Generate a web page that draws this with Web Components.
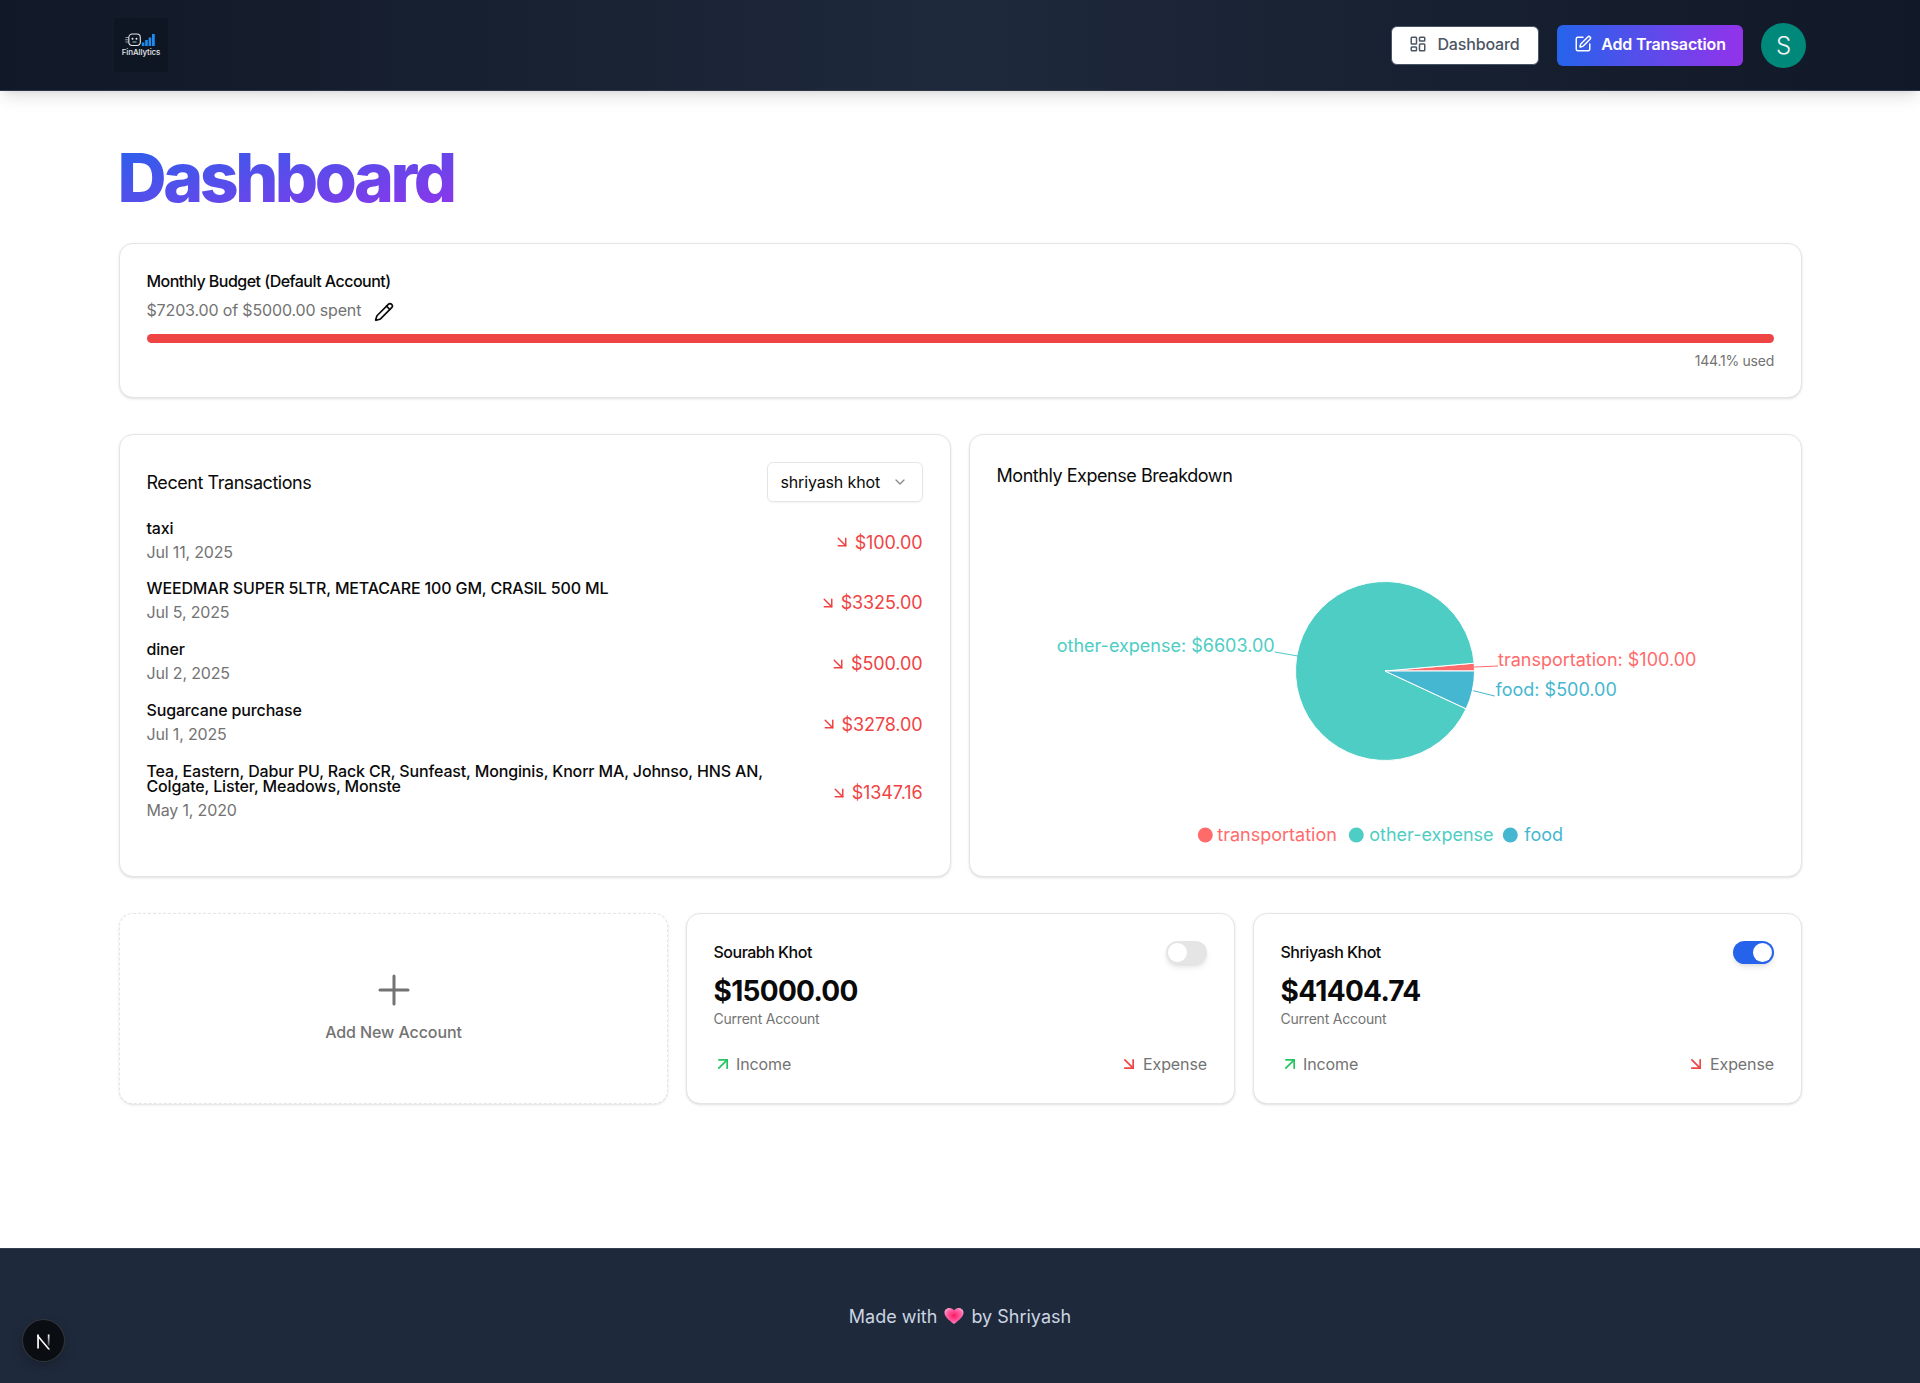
<!DOCTYPE html>
<html lang="en">
<head>
<meta charset="utf-8">
<title>Dashboard</title>
<style>
  html, body { margin: 0; padding: 0; background: #fff; }
  body { font-family: Inter, "Liberation Sans", sans-serif; color: #0a0a0a; }
</style>
</head>
<body>
<app-header></app-header>
<app-main>
  <budget-card></budget-card>
  <div slot="mid"><recent-transactions></recent-transactions></div>
  <div slot="mid"><expense-chart></expense-chart></div>
  <add-account slot="accounts"></add-account>
  <account-card slot="accounts" name="Sourabh Khot" amount="$15000.00"></account-card>
  <account-card slot="accounts" name="Shriyash Khot" amount="$41404.74" on></account-card>
</app-main>
<app-footer></app-footer>
<dev-badge></dev-badge>

<script>
const arrow = (size, dir) => `<svg width="${size}" height="${size}" viewBox="0 0 24 24" fill="none" stroke="currentColor" stroke-width="2" stroke-linecap="round" stroke-linejoin="round">${
  dir === "up" ? `<path d="M7 7h10v10"/><path d="M7 17 17 7"/>` : `<path d="m7 7 10 10"/><path d="M17 7v10H7"/>`
}</svg>`;

class AppHeader extends HTMLElement {
  constructor() {
    super();
    this.attachShadow({ mode: "open" }).innerHTML = `
      <style>
        :host {
          display: flex; align-items: center; justify-content: space-between;
          height: 91px; padding: 0 114px; box-sizing: border-box;
          background: linear-gradient(to right, #111827, #1e293b, #111827);
          border-bottom: 1px solid #2b3648;
          box-shadow: 0 10px 15px -3px rgba(0,0,0,.1), 0 4px 6px -4px rgba(0,0,0,.1);
          position: relative;
        }
        .logo { width: 54px; height: 54px; background: #0d1622; display: flex; flex-direction: column; align-items: center; justify-content: center; gap: 1px; }
        .logo span { font: 500 8px/9px Inter, sans-serif; color: #e5e7eb; letter-spacing: -.1px; }
        .nav { display: flex; align-items: center; }
        a { display: flex; align-items: center; justify-content: center; box-sizing: border-box; border-radius: 6px; font-size: 16px; letter-spacing: -.15px; padding-bottom: 2px; }
        .dash { width: 148px; height: 39px; gap: 10px; background: #fff; border: 1px solid #475569; color: #4b5563; font-weight: 500; margin-right: 18.5px; }
        .add { width: 186px; height: 41px; gap: 9px; background: linear-gradient(to right, #2563eb, #9333ea); color: #fff; font-weight: 600; margin-right: 18px; }
        .avatar { width: 45px; height: 45px; border-radius: 50%; background: #00897b; color: #f3f4f6; display: flex; align-items: center; justify-content: center; font-size: 24px; font-weight: 300; }
      </style>
      <div class="logo">
        <svg width="40" height="14" viewBox="0 0 40 14" fill="none">
          <rect x="7.800" y="1" width="11.500" height="11.500" rx="3.500" stroke="#e5e7eb" stroke-width="1.100"/>
          <circle cx="11.500" cy="5.800" r="1" fill="#e5e7eb"/><circle cx="15.500" cy="5.800" r="1" fill="#e5e7eb"/>
          <path d="M11.500 9h4" stroke="#e5e7eb" stroke-width=".8"/>
          <path d="M4.500 4.500h3M4 6.800h3.500M4.500 9h3" stroke="#d1d5db" stroke-width=".7"/>
          <rect x="20.800" y="9.500" width="2.600" height="3.500" fill="#1d8cf0"/>
          <rect x="24.200" y="7" width="2.600" height="6" fill="#1d8cf0"/>
          <rect x="27.600" y="4.500" width="2.600" height="8.500" fill="#1d8cf0"/>
          <rect x="31" y="1" width="2.800" height="12" fill="#1d8cf0"/>
        </svg>
        <span>FinAllytics</span>
      </div>
      <div class="nav">
        <a class="dash">
          <svg width="18" height="18" viewBox="0 0 24 24" fill="none" stroke="currentColor" stroke-width="2" stroke-linecap="round" stroke-linejoin="round"><rect width="7" height="9" x="3" y="3" rx="1"/><rect width="7" height="5" x="14" y="3" rx="1"/><rect width="7" height="9" x="14" y="12" rx="1"/><rect width="7" height="5" x="3" y="16" rx="1"/></svg>
          <span>Dashboard</span>
        </a>
        <a class="add">
          <svg width="18" height="18" viewBox="0 0 24 24" fill="none" stroke="currentColor" stroke-width="2" stroke-linecap="round" stroke-linejoin="round"><path d="M12 3H5a2 2 0 0 0-2 2v14a2 2 0 0 0 2 2h14a2 2 0 0 0 2-2v-7"/><path d="M18.375 2.625a1 1 0 0 1 3 3l-9.013 9.014a2 2 0 0 1-.853.505l-2.873.84a.5.5 0 0 1-.62-.62l.84-2.873a2 2 0 0 1 .506-.852z"/></svg>
          <span>Add Transaction</span>
        </a>
        <div class="avatar">S</div>
      </div>`;
  }
}

class AppMain extends HTMLElement {
  constructor() {
    super();
    this.attachShadow({ mode: "open" }).innerHTML = `
      <style>
        :host { display: block; padding: 0 118px 0 119px; height: 1157px; box-sizing: border-box; overflow: hidden; }
        h1 {
          margin: 46px 0 26px -1.500px;
          font-size: 68px; line-height: 80px; font-weight: 800; letter-spacing: -3.500px;
          width: max-content;
          background: linear-gradient(to bottom right, #2563eb, #9333ea);
          -webkit-background-clip: text; background-clip: text; color: transparent;
        }
        .mid { display: grid; grid-template-columns: 831.500px 1fr; gap: 18px; margin-top: 36px; height: 443px; }
        .accounts { display: grid; grid-template-columns: repeat(3, 1fr); gap: 18px; margin-top: 36px; }
      </style>
      <h1>Dashboard</h1>
      <slot></slot>
      <div class="mid"><slot name="mid"></slot></div>
      <div class="accounts"><slot name="accounts"></slot></div>`;
  }
}

const cardCss = `
  .card { background: #fff; border: 1px solid #e5e5e5; border-radius: 14px; box-shadow: 0 1px 3px rgba(0,0,0,.1), 0 1px 2px -1px rgba(0,0,0,.1); box-sizing: border-box; }
`;

class BudgetCard extends HTMLElement {
  constructor() {
    super();
    this.attachShadow({ mode: "open" }).innerHTML = `
      <style>
        ${cardCss}
        :host { display: block; }
        .card { height: 155px; padding: 27px 27px 0 26.500px; }
        .title { font-size: 16px; line-height: 20px; font-weight: 500; letter-spacing: -.53px; }
        .sub { display: flex; align-items: center; margin-top: 8px; height: 22px; font-size: 16px; letter-spacing: -.15px; color: #737373; gap: 13px; }
        .sub svg { color: #0a0a0a; margin-top: 3px; margin-left: -.5px; }
        .track { margin-top: 13px; height: 9px; border-radius: 5px; background: #ef4444; }
        .used { margin-top: 9px; text-align: right; font-size: 14px; letter-spacing: -.25px; line-height: 18px; color: #737373; }
      </style>
      <div class="card">
        <div class="title">Monthly Budget (Default Account)</div>
        <div class="sub"><span>$7203.00 of $5000.00 spent</span>
          <svg width="20" height="20" viewBox="0 0 24 24" fill="none" stroke="currentColor" stroke-width="2" stroke-linecap="round" stroke-linejoin="round"><path d="M21.174 6.812a1 1 0 0 0-3.986-3.987L3.842 16.174a2 2 0 0 0-.5.83l-1.321 4.352a.5.5 0 0 0 .623.622l4.353-1.32a2 2 0 0 0 .83-.497z"/><path d="m15 5 4 4"/></svg>
        </div>
        <div class="track"></div>
        <div class="used">144.1% used</div>
      </div>`;
  }
}

class RecentTransactions extends HTMLElement {
  constructor() {
    super();
    const rows = [
      ["taxi", "Jul 11, 2025", "$100.00"],
      ["WEEDMAR SUPER 5LTR, METACARE 100 GM, CRASIL 500 ML", "Jul 5, 2025", "$3325.00"],
      ["diner", "Jul 2, 2025", "$500.00"],
      ["Sugarcane purchase", "Jul 1, 2025", "$3278.00"],
      ["Tea, Eastern, Dabur PU, Rack CR, Sunfeast, Monginis, Knorr MA, Johnso, HNS AN, Colgate, Lister, Meadows, Monste", "May 1, 2020", "$1347.16"],
    ];
    this.attachShadow({ mode: "open" }).innerHTML = `
      <style>
        ${cardCss}
        :host { display: block; height: 100%; }
        .card { height: 100%; padding: 27px 27px 0 26.500px; }
        .head { display: flex; align-items: center; justify-content: space-between; height: 40px; }
        .head h2 { margin: 0; font-size: 18px; font-weight: 400; letter-spacing: -.45px; }
        .select { width: 156px; height: 40px; box-sizing: border-box; border: 1px solid #e5e5e5; border-radius: 6px; box-shadow: 0 1px 2px rgba(0,0,0,.05); display: flex; align-items: center; justify-content: space-between; padding: 0 14px 0 13px; font-size: 16px; letter-spacing: -.15px; }
        .select svg { color: #8a8a8a; }
        .list { margin-top: 18.500px; display: flex; flex-direction: column; gap: 19.750px; }
        .row { display: flex; align-items: center; justify-content: space-between; }
        .name { font-size: 16px; line-height: 15px; font-weight: 500; letter-spacing: -.15px; max-width: 640px; }
        .date { margin-top: 6px; font-size: 16px; letter-spacing: -.17px; line-height: 20px; color: #737373; }
        .amt { display: flex; align-items: center; gap: 4px; margin-top: 2px; font-size: 18px; letter-spacing: -.1px; color: #ef4444; white-space: nowrap; }
      </style>
      <div class="card">
        <div class="head"><h2>Recent Transactions</h2>
          <div class="select"><span>shriyash khot</span>
            <svg width="16" height="16" viewBox="0 0 24 24" fill="none" stroke="currentColor" stroke-width="2" stroke-linecap="round" stroke-linejoin="round"><path d="m6 9 6 6 6-6"/></svg>
          </div>
        </div>
        <div class="list">
          ${rows.map(r => `<div class="row"><div><div class="name">${r[0]}</div><div class="date">${r[1]}</div></div><div class="amt">${arrow(18, "down")}<span>${r[2]}</span></div></div>`).join("")}
        </div>
      </div>`;
  }
}

class ExpenseChart extends HTMLElement {
  constructor() {
    super();
    // svg sits on the card's padding box, so these are reference coords minus (970.75, 435)
    const cx = 414, cy = 236, r = 89.5;
    const pt = (deg) => [(cx + r * Math.cos(deg * Math.PI / 180)).toFixed(2), (cy - r * Math.sin(deg * Math.PI / 180)).toFixed(2)];
    const slice = (from, to, color) => {
      const a = pt(from), b = pt(to), large = to - from > 180 ? 1 : 0;
      return `<path d="M${cx} ${cy}L${a[0]} ${a[1]}A${r} ${r} 0 ${large} 0 ${b[0]} ${b[1]}Z" fill="${color}" stroke="#fff"/>`;
    };
    this.attachShadow({ mode: "open" }).innerHTML = `
      <style>
        ${cardCss}
        :host { display: block; height: 100%; }
        .card { height: 100%; position: relative; }
        h2 { margin: 0; padding: 29px 27px 0; font-size: 18px; line-height: 24px; font-weight: 400; letter-spacing: -.45px; }
        svg { position: absolute; left: 1.250px; top: 0; }
        text { font-family: Inter, sans-serif; font-size: 18px; }
      </style>
      <div class="card">
        <h2>Monthly Expense Breakdown</h2>
        <svg width="830" height="441">
          ${slice(0, 5, "#ff6b6b")}
          ${slice(5, 335, "#4ecdc4")}
          ${slice(335, 360, "#45b7d1")}
          <path d="M503.300 232 L527 231" stroke="#ff6b6b" fill="none"/>
          <path d="M502.300 255.700 L523.700 261" stroke="#45b7d1" fill="none"/>
          <path d="M303.600 217 L326.900 221" stroke="#4ecdc4" fill="none"/>
          <text x="527" y="231" fill="#ff6b6b">transportation: $100.00</text>
          <text x="524.600" y="261" fill="#45b7d1">food: $500.00</text>
          <text x="303.600" y="217" fill="#4ecdc4" text-anchor="end">other-expense: $6603.00</text>
          <circle cx="234.300" cy="400" r="7.500" fill="#ff6b6b"/>
          <text x="246.300" y="406" fill="#ff6b6b">transportation</text>
          <circle cx="385.300" cy="400" r="7.500" fill="#4ecdc4"/>
          <text x="398.300" y="406" fill="#4ecdc4">other-expense</text>
          <circle cx="539.300" cy="400" r="7.500" fill="#45b7d1"/>
          <text x="553.300" y="406" fill="#45b7d1">food</text>
        </svg>
      </div>`;
  }
}

class AddAccount extends HTMLElement {
  constructor() {
    super();
    this.attachShadow({ mode: "open" }).innerHTML = `
      <style>
        ${cardCss}
        :host { display: block; }
        .card { height: 191px; border-style: dashed; display: flex; flex-direction: column; align-items: center; padding-top: 52px; color: #737373; }
        span { margin-top: 6px; font-size: 16px; letter-spacing: -.1px; line-height: 24px; font-weight: 500; }
      </style>
      <div class="card">
        <svg width="48" height="48" viewBox="0 0 24 24" fill="none" stroke="currentColor" stroke-width="1.500" stroke-linecap="round" stroke-linejoin="round"><path d="M5 12h14"/><path d="M12 5v14"/></svg>
        <span>Add New Account</span>
      </div>`;
  }
}

class AccountCard extends HTMLElement {
  constructor() {
    super();
    const on = this.hasAttribute("on");
    this.attachShadow({ mode: "open" }).innerHTML = `
      <style>
        ${cardCss}
        :host { display: block; }
        .card { height: 191px; padding: 26px 27px 0 26.500px; }
        .top { display: flex; align-items: flex-start; justify-content: space-between; height: 24px; }
        .name { font-size: 16px; line-height: 24px; font-weight: 500; letter-spacing: -.5px; }
        .toggle { width: 41px; height: 23px; border-radius: 12px; background: ${on ? "#2563eb" : "#e5e5e5"}; display: flex; align-items: center; justify-content: ${on ? "flex-end" : "flex-start"}; padding: 0 2px; box-sizing: border-box; box-shadow: 0 4px 6px -1px rgba(0,0,0,.1), 0 2px 4px -2px rgba(0,0,0,.1); margin-top: 1px; }
        .toggle i { width: 19px; height: 19px; border-radius: 50%; background: #fff; display: block; }
        .amount { margin-top: 9px; font-size: 28px; line-height: 36px; font-weight: 700; letter-spacing: -.7px; }
        .type { font-size: 14px; letter-spacing: -.22px; line-height: 20px; color: #737373; margin-top: -.5px; }
        .foot { display: flex; justify-content: space-between; margin-top: 23.500px; font-size: 16px; letter-spacing: -.1px; line-height: 24px; color: #737373; }
        .foot div { display: flex; align-items: center; }
        .up { color: #22c55e; display: flex; margin: 0 3px 0 -.5px; } .down { color: #ef4444; display: flex; margin-right: 4px; }
      </style>
      <div class="card">
        <div class="top"><div class="name">${this.getAttribute("name")}</div><div class="toggle"><i></i></div></div>
        <div class="amount">${this.getAttribute("amount")}</div>
        <div class="type">Current Account</div>
        <div class="foot">
          <div><span class="up">${arrow(20, "up")}</span><span>Income</span></div>
          <div><span class="down">${arrow(20, "down")}</span><span>Expense</span></div>
        </div>
      </div>`;
  }
}

class AppFooter extends HTMLElement {
  constructor() {
    super();
    this.attachShadow({ mode: "open" }).innerHTML = `
      <style>
        :host { display: flex; align-items: center; justify-content: center; height: 135px; box-sizing: border-box; background: #1e293b; border-top: 1px solid #334155; color: #cbd5e1; font-size: 18px; gap: 7px; }
      </style>
      <span>Made with</span>
      <svg width="20" height="20" viewBox="0 0 20 20">
        <defs><radialGradient id="h" cx=".5" cy=".48" r=".55"><stop offset="0" stop-color="#ef1f52"/><stop offset=".35" stop-color="#ff3d85"/><stop offset=".8" stop-color="#ff6fb0"/><stop offset="1" stop-color="#ffa0c8"/></radialGradient></defs>
        <path d="M10 18 C4 13.500 .5 10.500 .5 6.500 C.5 3.500 3 2 5.500 2 C7.500 2 9 3 10 4.500 C11 3 12.500 2 14.500 2 C17 2 19.500 3.500 19.500 6.500 C19.500 10.500 16 13.500 10 18Z" fill="url(#h)"/>
      </svg>
      <span>by Shriyash</span>`;
  }
}

class DevBadge extends HTMLElement {
  constructor() {
    super();
    this.attachShadow({ mode: "open" }).innerHTML = `
      <style>
        :host { position: fixed; left: 22.500px; bottom: 22px; width: 41px; height: 41px; border-radius: 50%; background: #0a0d12; box-shadow: 0 0 0 1px #33363b, 0 4px 12px rgba(0,0,0,.25); display: flex; align-items: center; justify-content: center; }
      </style>
      <svg width="17" height="19" viewBox="0 0 17 19" fill="none" style="margin-top:2px">
        <defs><linearGradient id="n" x1="0" y1="0" x2="0" y2="1"><stop offset="0" stop-color="#fff"/><stop offset="1" stop-color="#fff" stop-opacity=".25"/></linearGradient></defs>
        <path d="M2.200 2.500h1.700v14h-1.700z" fill="#fff"/>
        <path d="M2.600 2.500 L15.200 17.500 L13.200 17.500 L2.200 4.500z" fill="#fff"/>
        <path d="M12.800 2.500h1.700v11h-1.700z" fill="url(#n)"/>
      </svg>`;
  }
}

customElements.define("app-header", AppHeader);
customElements.define("app-main", AppMain);
customElements.define("budget-card", BudgetCard);
customElements.define("recent-transactions", RecentTransactions);
customElements.define("expense-chart", ExpenseChart);
customElements.define("add-account", AddAccount);
customElements.define("account-card", AccountCard);
customElements.define("app-footer", AppFooter);
customElements.define("dev-badge", DevBadge);
</script>
</body>
</html>
